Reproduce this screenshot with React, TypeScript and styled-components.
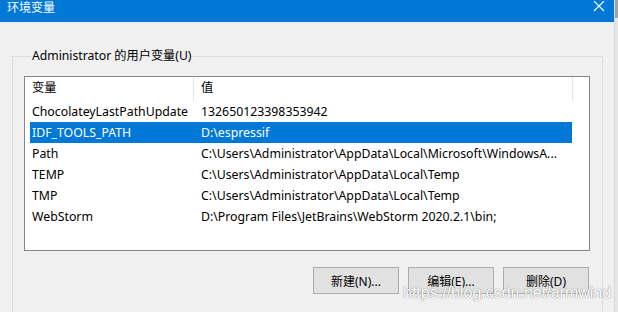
import React from 'react';
import styled, { createGlobalStyle } from 'styled-components';

const GlobalStyle = createGlobalStyle`
  html, body {
    margin: 0;
    padding: 0;
    background: #f0f0f0;
  }
  body {
    font-family: "Noto Sans", "Noto Sans CJK SC", sans-serif;
    font-size: 12px;
    color: #000;
  }
`;

const Frame = styled.div`
  position: relative;
  display: flex;
  width: 618px;
  height: 312px;
  overflow: hidden;
`;

const Window = styled.div`
  display: flex;
  flex-direction: column;
  width: 614px;
  background: #f0f0f0;
`;

const Edge = styled.div`
  flex: 1;
  border-left: 1px solid #d9d9d9;
  background: linear-gradient(#9aa4ae 0, #9aa4ae 18px, #e6e6e6 18px);
`;

const TitleBar = styled.div`
  display: flex;
  align-items: flex-start;
  justify-content: space-between;
  height: 22px;
  padding: 1px 9px 0 7px;
  box-sizing: border-box;
  background: #0078d7;
  color: #fff;
  line-height: 14px;
  font-size: 12px;
`;

const Body = styled.div`
  flex: 1;
  display: flex;
  padding: 26px 11px 0 12px;
`;

const Group = styled.fieldset`
  flex: 1;
  margin: 0;
  padding: 0 12px 0 11px;
  border: 1px solid #dcdcdc;
  border-bottom: none;
  min-width: 0;
`;

const Legend = styled.legend`
  margin-left: 7px;
  padding: 0 1px;
  line-height: 16px;
  font-size: 12.2px;
`;

const ListBox = styled.div`
  margin-top: 12px;
  height: 173px;
  background: #fff;
  border: 1px solid #828790;
  font-size: 12.3px;
`;

const Header = styled.div`
  display: flex;
  height: 24px;
`;

const HeadCell = styled.div<{ $width: number }>`
  width: ${p => p.$width}px;
  padding-left: 7px;
  box-sizing: border-box;
  line-height: 22px;
  border-right: 1px solid #e5e5e5;
`;

const Row = styled.div<{ $selected?: boolean }>`
  display: flex;
  height: 21px;
  margin-left: 5px;
  width: 542px;
  line-height: 21px;
  background: ${p => (p.$selected ? '#0078d7' : 'transparent')};
  color: ${p => (p.$selected ? '#fff' : '#000')};
`;

const Cell = styled.div<{ $width?: number }>`
  ${p => (p.$width ? `width: ${p.$width}px;` : 'flex: 1;')}
  padding-left: 2px;
  box-sizing: border-box;
  white-space: nowrap;
  overflow: hidden;
`;

const ButtonRow = styled.div`
  display: flex;
  justify-content: flex-end;
  gap: 9px;
  margin-top: 16px;
  padding-right: 1px;
`;

const Button = styled.button`
  width: 86px;
  height: 27px;
  padding: 0;
  background: #e1e1e1;
  border: 1px solid #adadad;
  font-family: inherit;
  font-size: 12px;
  color: #000;
`;

const Watermark = styled.div`
  position: absolute;
  left: 403px;
  top: 284px;
  font-family: "Liberation Sans", Arial, sans-serif;
  font-size: 16px;
  color: #fff;
  text-shadow: 0 0 1px #8c8c8c, 0 0 1px #8c8c8c;
  pointer-events: none;
`;

const vars = [
  { name: 'ChocolateyLastPathUpdate', value: '132650123398353942' },
  { name: 'IDF_TOOLS_PATH', value: 'D:\\espressif', selected: true },
  { name: 'Path', value: 'C:\\Users\\Administrator\\AppData\\Local\\Microsoft\\WindowsA...' },
  { name: 'TEMP', value: 'C:\\Users\\Administrator\\AppData\\Local\\Temp' },
  { name: 'TMP', value: 'C:\\Users\\Administrator\\AppData\\Local\\Temp' },
  { name: 'WebStorm', value: 'D:\\Program Files\\JetBrains\\WebStorm 2020.2.1\\bin;' },
];

function CloseIcon() {
  return (
    <svg width="12" height="12" viewBox="0 0 12 12">
      <path d="M1 0L11 10M11 0L1 10" stroke="#fff" strokeWidth="1.1" fill="none" />
    </svg>
  );
}

export default function App() {
  return (
    <Frame>
      <GlobalStyle />
      <Window>
        <TitleBar>
          <span>环境变量</span>
          <CloseIcon />
        </TitleBar>
        <Body>
          <Group>
            <Legend>Administrator 的用户变量(U)</Legend>
            <ListBox>
              <Header>
                <HeadCell $width={169}>变量</HeadCell>
                <HeadCell $width={379}>值</HeadCell>
              </Header>
              {vars.map(v => (
                <Row key={v.name} $selected={v.selected}>
                  <Cell $width={169}>{v.name}</Cell>
                  <Cell>{v.value}</Cell>
                </Row>
              ))}
            </ListBox>
            <ButtonRow>
              <Button>新建(N)...</Button>
              <Button>编辑(E)...</Button>
              <Button>删除(D)</Button>
            </ButtonRow>
          </Group>
        </Body>
      </Window>
      <Edge />
      <Watermark>https://blog.csdn.net/armwind</Watermark>
    </Frame>
  );
}
